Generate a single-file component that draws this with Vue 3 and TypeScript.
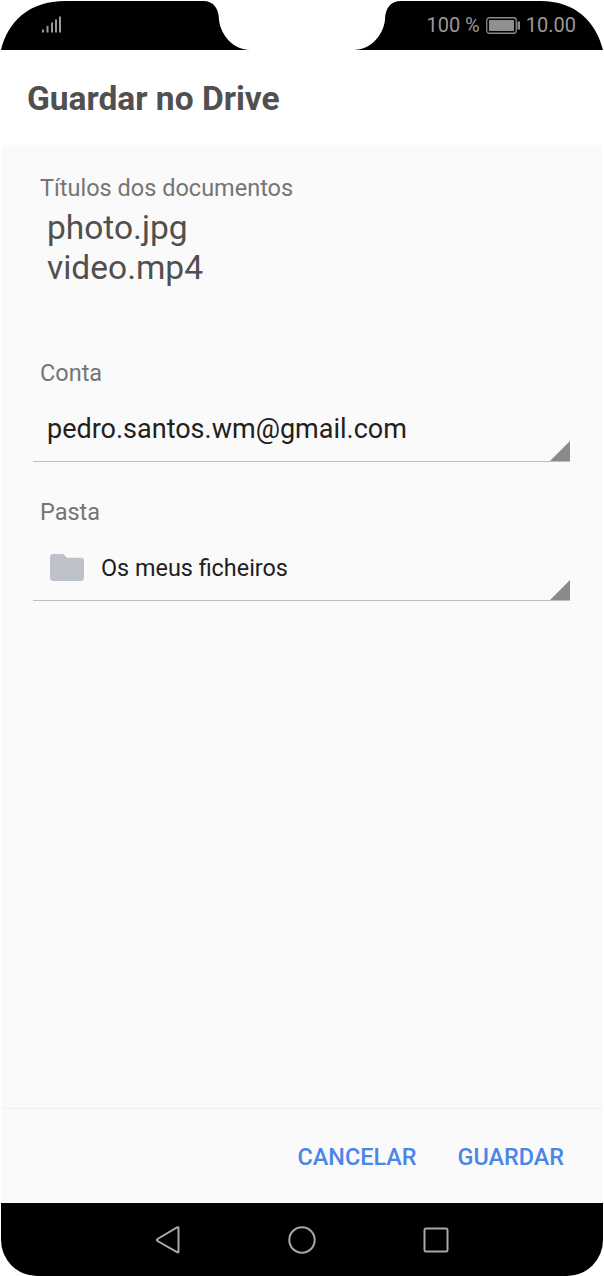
<script setup lang="ts">
interface Field {
  label: string
  value: string
  folder?: boolean
}

const docs = ['photo.jpg', 'video.mp4']

const fields: Field[] = [
  { label: 'Conta', value: 'pedro.santos.wm@gmail.com' },
  { label: 'Pasta', value: 'Os meus ficheiros', folder: true },
]
</script>

<template>
  <div class="phone">
    <div class="status">
      <svg class="status__shape" width="604" height="51" viewBox="0 0 604 51">
        <path
          d="M1 50 C8 22 28 1 66 1 L203 1 C214 1 219 9 219 20 C221 36 234 50 250 50 L354 50 C370 50 383 36 385 20 C385 9 390 1 401 1 L540 1 C576 1 596 22 603 50 Z"
          fill="#000"
        />
      </svg>
      <svg class="status__signal" width="20" height="18" viewBox="0 0 20 18">
        <rect x="0" y="13.5" width="2" height="3" fill="#999" />
        <rect x="4.5" y="10" width="2" height="6.5" fill="#999" />
        <rect x="9" y="6.5" width="2" height="10" fill="#999" />
        <rect x="13" y="3.5" width="2" height="13" fill="#999" />
        <rect x="17" y="0.5" width="2" height="16" fill="#999" />
      </svg>
      <div class="status__right">
        <span>100 %</span>
        <svg width="34" height="17" viewBox="0 0 34 17">
          <rect x="0.75" y="0.75" width="29.5" height="15.5" rx="2.5" fill="none" stroke="#8a8a8a" stroke-width="1.3" />
          <rect x="3" y="3" width="25" height="11" rx="0.5" fill="#8f8f8f" />
          <rect x="31.5" y="4.5" width="2.5" height="8" fill="#8a8a8a" />
        </svg>
        <span>10.00</span>
      </div>
    </div>

    <header class="title">Guardar no Drive</header>

    <main class="content">
      <section class="docs">
        <div class="label">Títulos dos documentos</div>
        <div v-for="doc in docs" :key="doc" class="docs__name">{{ doc }}</div>
      </section>

      <section v-for="field in fields" :key="field.label" class="field">
        <div class="label">{{ field.label }}</div>
        <div class="select" :class="{ 'select--folder': field.folder }">
          <svg v-if="field.folder" class="select__icon" width="34" height="27" viewBox="0 0 34 28" preserveAspectRatio="none">
            <path
              d="M3 0 H12 C13 0 13.6 .4 14.2 1 L17 4 H31 C32.7 4 34 5.3 34 7 V25 C34 26.7 32.7 28 31 28 H3 C1.3 28 0 26.7 0 25 V3 C0 1.3 1.3 0 3 0 Z"
              fill="#bdc1c8"
            />
          </svg>
          <span>{{ field.value }}</span>
          <i class="select__corner" />
        </div>
      </section>
    </main>

    <footer class="actions">
      <button type="button">CANCELAR</button>
      <button type="button">GUARDAR</button>
    </footer>

    <nav class="nav">
      <svg width="26" height="28" viewBox="0 0 26 28">
        <path d="M23.5 2 V25.5 C23.5 26.5 23 26.8 22 26.2 L2.5 15 C1.7 14.5 1.7 13.5 2.5 13 L22 1.5 C23 1 23.5 1.2 23.5 2 Z" fill="none" stroke="#a8a8a8" stroke-width="2" />
      </svg>
      <svg width="28" height="28" viewBox="0 0 28 28">
        <circle cx="14" cy="14" r="12.7" fill="none" stroke="#a8a8a8" stroke-width="2" />
      </svg>
      <svg width="26" height="26" viewBox="0 0 26 26">
        <rect x="1.5" y="1.5" width="23" height="23" rx="1.5" fill="none" stroke="#a8a8a8" stroke-width="2" />
      </svg>
    </nav>
  </div>
</template>

<style>
html,
body {
  margin: 0;
  background: #fff;
}
</style>

<style scoped>
.phone {
  width: 604px;
  height: 1276px;
  display: flex;
  flex-direction: column;
  font-family: Roboto, "Liberation Sans", sans-serif;
  overflow: hidden;
  background: #fff;
}

.status {
  position: relative;
  height: 50px;
  flex: none;
  display: flex;
  align-items: center;
  justify-content: space-between;
  padding: 0 28px 0 42px;
  box-sizing: border-box;
}

.status__shape {
  position: absolute;
  left: 0;
  top: 0;
}

.status__signal {
  position: relative;
}

.status__right {
  position: relative;
  display: flex;
  align-items: center;
  gap: 6px;
  font-size: 20px;
  color: #999;
}

.title {
  height: 95px;
  flex: none;
  padding: 29px 0 0 27px;
  box-sizing: border-box;
  font-size: 33.5px;
  line-height: 40px;
  font-weight: 700;
  color: #505050;
}

.content {
  flex: 1;
  margin: 0 1px;
  background: #fafafa;
  padding: 28px 33px 0 32px;
}

.label {
  padding-left: 7px;
  font-size: 23.5px;
  line-height: 30px;
  color: #757575;
}

.docs {
  height: 185px;
}

.docs__name {
  padding-left: 14px;
  font-size: 33.5px;
  line-height: 40px;
  color: #505050;
}

.docs .label {
  margin-bottom: 5px;
}

.field {
  height: 139px;
}

.select {
  position: relative;
  height: 74px;
  padding: 8px 0 0 14px;
  display: flex;
  align-items: center;
  box-sizing: border-box;
  border-bottom: 1px solid #bdbdbd;
  font-size: 27px;
  color: #212121;
}

.select--folder {
  padding-left: 17px;
  font-size: 23.4px;
}

.select__icon {
  margin: -1px 17px 0 0;
  flex: none;
}

.select__corner {
  position: absolute;
  right: 0;
  bottom: 0;
  width: 20px;
  height: 20px;
  background: #8a8a8a;
  clip-path: polygon(100% 0, 100% 100%, 0 100%);
}

.actions {
  height: 95px;
  flex: none;
  margin: 0 1px;
  padding: 2px 39px 0 0;
  box-sizing: border-box;
  border-top: 1px solid #f0f0f0;
  background: #fafafb;
  display: flex;
  justify-content: flex-end;
  align-items: center;
  gap: 41px;
}

.actions button {
  border: 0;
  padding: 0;
  background: none;
  font-family: inherit;
  font-size: 23.4px;
  font-weight: 500;
  color: #4a86e8;
}

.nav {
  height: 73px;
  flex: none;
  margin: 0 1px;
  background: #000;
  border-radius: 0 0 36px 36px;
  display: flex;
  align-items: center;
  justify-content: center;
  gap: 107px;
}
</style>
